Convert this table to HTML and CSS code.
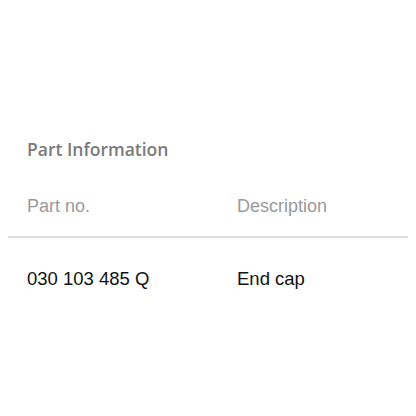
FILE: index.html
```html
<!DOCTYPE html>
<html>
<head>
<meta charset="utf-8">
<link rel="stylesheet" href="styles.css">
</head>
<body>
<section class="part-info">
  <h2 class="title">Part Information</h2>
  <div class="row head">
    <span class="cell">Part no.</span>
    <span class="cell">Description</span>
  </div>
  <div class="row item">
    <span class="cell">030 103 485 Q</span>
    <span class="cell">End cap</span>
  </div>
</section>
</body>
</html>
```
FILE: styles.css
```css
html, body {
  background: #ffffff;
}
body {
  margin: 8px;
  font-family: "Liberation Sans", Arial, sans-serif;
  font-size: 18px;
  line-height: 20px;
}
.part-info {
  padding-top: 131px;
}
.title {
  margin: 0;
  padding-left: 19px;
  font-family: "Open Sans", "Liberation Sans", sans-serif;
  font-weight: 600;
  font-size: 17.5px;
  line-height: 20px;
  color: #7b7b7b;
}
.row {
  display: grid;
  grid-template-columns: 210px 1fr;
  padding-left: 19px;
}
.head {
  margin-top: 37px;
  padding-bottom: 20px;
  border-bottom: 2px solid #dddddd;
  color: #9a9a9a;
}
.item {
  padding-top: 31px;
  font-size: 18.5px;
  color: #111111;
}
```
